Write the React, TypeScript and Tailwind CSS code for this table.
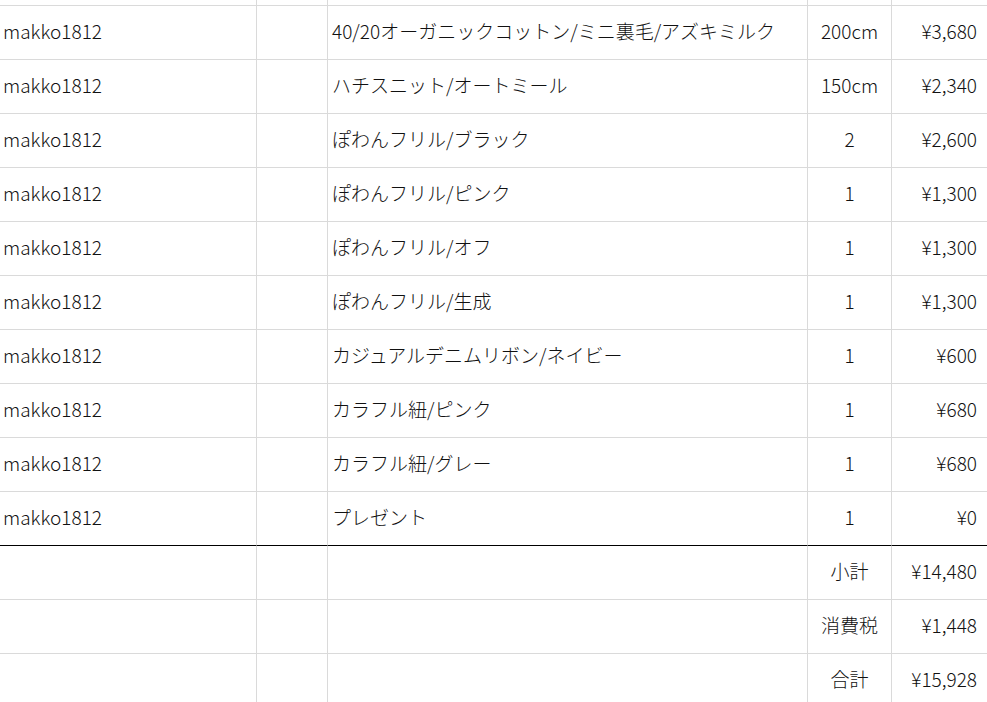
import React from "react";

type Item = { user: string; name: string; qty: string; price: string };

const items: Item[] = [
  { user: "makko1812", name: "40/20オーガニックコットン/ミニ裏毛/アズキミルク", qty: "200cm", price: "¥3,680" },
  { user: "makko1812", name: "ハチスニット/オートミール", qty: "150cm", price: "¥2,340" },
  { user: "makko1812", name: "ぽわんフリル/ブラック", qty: "2", price: "¥2,600" },
  { user: "makko1812", name: "ぽわんフリル/ピンク", qty: "1", price: "¥1,300" },
  { user: "makko1812", name: "ぽわんフリル/オフ", qty: "1", price: "¥1,300" },
  { user: "makko1812", name: "ぽわんフリル/生成", qty: "1", price: "¥1,300" },
  { user: "makko1812", name: "カジュアルデニムリボン/ネイビー", qty: "1", price: "¥600" },
  { user: "makko1812", name: "カラフル紐/ピンク", qty: "1", price: "¥680" },
  { user: "makko1812", name: "カラフル紐/グレー", qty: "1", price: "¥680" },
  { user: "makko1812", name: "プレゼント", qty: "1", price: "¥0" },
];

const totals = [
  { label: "小計", value: "¥14,480" },
  { label: "消費税", value: "¥1,448" },
  { label: "合計", value: "¥15,928" },
];

const cell = "flex items-center pb-[2px] border-r border-b border-[#dadada]";

export default function App() {
  return (
    <div
      className="h-[702px] w-[987px] overflow-hidden bg-white text-[19px] font-light text-[#111]"
      style={{ fontFamily: '"Noto Sans CJK JP", "Noto Sans", sans-serif' }}
    >
      <div className="grid grid-cols-[257px_71px_480px_84px_95px]">
        {/* partial row above */}
        <div className="h-[6px] border-r border-b border-[#dadada]" />
        <div className="h-[6px] border-r border-b border-[#dadada]" />
        <div className="h-[6px] border-r border-b border-[#dadada]" />
        <div className="h-[6px] border-r border-b border-[#dadada]" />
        <div className="h-[6px] border-b border-[#dadada]" />

        {items.map((it, i) => {
          const last = i === items.length - 1;
          const b = last ? "border-b-[#000]" : "";
          return (
            <React.Fragment key={i}>
              <div className={`${cell} ${b} h-[54px] pl-[3px] whitespace-nowrap`}>{it.user}</div>
              <div className={`${cell} ${b} h-[54px]`} />
              <div className={`${cell} ${b} h-[54px] pl-[4px] whitespace-nowrap`}>{it.name}</div>
              <div className={`${cell} ${b} h-[54px] justify-center`}>{it.qty}</div>
              <div className={`flex items-center pb-[2px] border-b border-[#dadada] ${b} h-[54px] justify-end pr-[10px]`}>
                {it.price}
              </div>
            </React.Fragment>
          );
        })}

        {totals.map((t) => (
          <React.Fragment key={t.label}>
            <div className={`${cell} h-[54px]`} />
            <div className={`${cell} h-[54px]`} />
            <div className={`${cell} h-[54px]`} />
            <div className={`${cell} h-[54px] justify-center`}>{t.label}</div>
            <div className="flex h-[54px] items-center justify-end border-b border-[#dadada] pb-[2px] pr-[10px]">
              {t.value}
            </div>
          </React.Fragment>
        ))}
      </div>
    </div>
  );
}
